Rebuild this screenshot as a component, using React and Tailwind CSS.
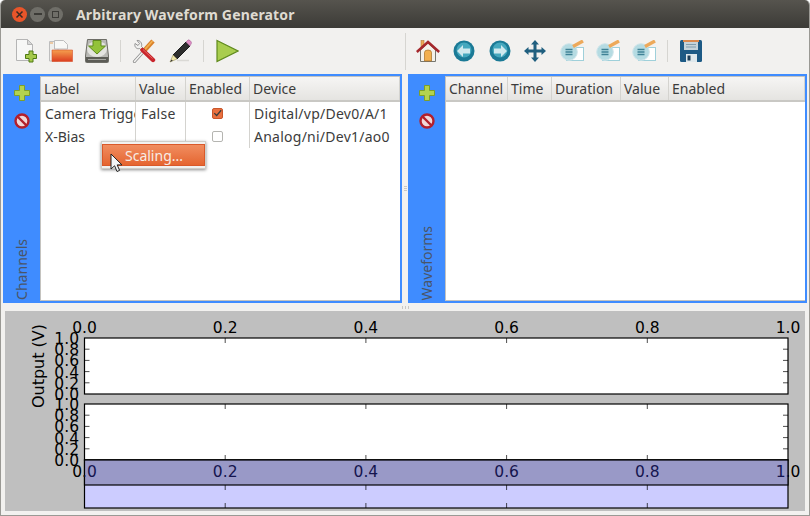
import React from "react";

const labelFont = "font-['Noto_Sans','Open_Sans',sans-serif]";

// Toolbar icons
function NewDoc() {
    return (
        <svg width="24" height="26" viewBox="0 0 24 26">
            <path d="M3.5 1.5H14.5L19.5 6.5V22.5H3.5Z" fill="#f7f7f6" stroke="#b5b5b5" />
            <path d="M14.5 1.5V6.5H19.5Z" fill="#d8d8d8" stroke="#b5b5b5" />
            <path d="M16 13H20V16.5H23.5V20.5H20V24H16V20.5H12.5V16.5H16Z" fill="#a5c94a" stroke="#4f7a14" />
        </svg>
    );
}

function OpenFolder() {
    return (
        <svg width="26" height="24" viewBox="0 0 26 24">
            <path d="M1.5 2.5H10V22H1.5Z" fill="#efefed" stroke="#bdbdbd" />
            <path d="M6.5 1.5H15.5L19.5 5.5V10H6.5Z" fill="#f8f8f6" stroke="#bdbdbd" />
            <rect x="2" y="3.5" width="3" height="1" fill="#e8a35c" />
            <path d="M4 11H24.5V22.5H4Z" fill="url(#folderFill)" stroke="#d9502a" strokeWidth="0.6" />
            <defs>
                <linearGradient id="folderFill" x1="0" y1="0" x2="0" y2="1">
                    <stop offset="0" stopColor="#f5a04e" />
                    <stop offset="1" stopColor="#dc3d20" />
                </linearGradient>
            </defs>
        </svg>
    );
}

function SaveDrive() {
    return (
        <svg width="26" height="26" viewBox="0 0 26 26">
            <path d="M3.5 1.5H22.5L24.5 18V23.5Q24.5 24.5 23.5 24.5H2.5Q1.5 24.5 1.5 23.5V18Z" fill="#b9b9b5" stroke="#6d6d66" />
            <ellipse cx="13" cy="11" rx="10" ry="8" fill="#e4e4e0" />
            <rect x="2" y="19" width="22" height="5" fill="#5c5c56" />
            <rect x="4" y="21" width="18" height="1" fill="#a5a5a0" />
            <path d="M9 2.5H17V8H21.5L13 16L4.5 8H9Z" fill="#93c23a" stroke="#5f8a1c" />
        </svg>
    );
}

function Tools() {
    return (
        <svg width="24" height="24" viewBox="0 0 24 24">
            {/* screwdriver */}
            <path d="M2.5 22.5L11 13" stroke="#8f8f8f" strokeWidth="3.2" strokeLinecap="round" />
            <path d="M2.5 22.5L11 13" stroke="#f4f4f2" strokeWidth="1.6" strokeLinecap="round" />
            <path d="M11 13L21 2" stroke="#d9802a" strokeWidth="4.6" />
            <path d="M11.5 12L20.5 2" stroke="#f2b04f" strokeWidth="1.8" />
            {/* wrench */}
            <path d="M5 1.5L7.5 4.5L6 6.5L3 4.5C2 7.5 4.5 10.5 7.5 9.5L10.5 12.5L12.5 10.5L9.5 7.5C10.5 4.5 8 0.8 5 1.5Z" fill="#f0f0ee" stroke="#8a8a8a" strokeWidth="0.9" />
            <path d="M10.5 11L21 21" stroke="#c9252c" strokeWidth="4.4" strokeLinecap="round" />
            <path d="M11 10.5L20.5 19.5" stroke="#e66a62" strokeWidth="1" />
        </svg>
    );
}

function Pencil() {
    return (
        <svg width="24" height="24" viewBox="0 0 24 24">
            <path d="M5 16L18 3L22 7L9 20Z" fill="#2e2e2e" stroke="#1d1d1d" />
            <path d="M18 3L20 1C21 0.3 23.5 2.5 23.5 4L22 7Z" fill="#e08fc5" stroke="#a8689a" strokeWidth="0.6" />
            <path d="M5 16L9 20L2 23Z" fill="#efe6a8" stroke="#9c9462" strokeWidth="0.6" />
            <path d="M2 23L3.6 20.4L4.8 21.7Z" fill="#333" />
            <path d="M9 21.5H21" stroke="#dad9d5" strokeWidth="1.5" />
        </svg>
    );
}

function Play() {
    return (
        <svg width="24" height="24" viewBox="0 0 24 24">
            <path d="M2 1.5L23 12L2 22.5Z" fill="#a9cd4e" stroke="#5f8a1c" strokeWidth="1.2" />
        </svg>
    );
}

function Home() {
    return (
        <svg width="24" height="24" viewBox="0 0 24 24">
            <rect x="5" y="1.5" width="3" height="7" fill="#eda95a" stroke="#a86f23" strokeWidth="0.5" />
            <path d="M4.5 11V22.5H19.5V11L12 4Z" fill="#f3f1ea" stroke="#77776f" />
            <path d="M8.5 22V13.5Q8.5 11 12 11Q15.5 11 15.5 13.5V22Z" fill="#f2b04f" stroke="#a86f23" strokeWidth="0.7" />
            <path d="M0.8 13L12 3L23.2 13" fill="none" stroke="#a5282c" strokeWidth="2.6" />
        </svg>
    );
}

function NavArrow({ flip }) {
    return (
        <svg width="22" height="22" viewBox="0 0 22 22">
            <circle cx="11" cy="11" r="10.5" fill="#1b7a96" />
            <circle cx="11" cy="10" r="7.5" fill="#45a8be" />
            <path
                d={flip ? "M18 11L12 5V8.5H5V13.5H12V17Z" : "M4 11L10 5V8.5H17V13.5H10V17Z"}
                fill="#cfe9ee"
            />
        </svg>
    );
}

function MoveIcon() {
    return (
        <svg width="24" height="24" viewBox="0 0 24 24" fill="#205f7f" className="-translate-x-px">
            <path d="M12 1L16 5.5H13.5V10.5H18.5V8L23 12L18.5 16V13.5H13.5V18.5H16L12 23L8 18.5H10.5V13.5H5.5V16L1 12L5.5 8V10.5H10.5V5.5H8Z" />
        </svg>
    );
}

function EditParams() {
    return (
        <svg width="24" height="22" viewBox="0 0 24 22">
            <rect x="6.5" y="7.5" width="17" height="13" fill="#fff" stroke="#9fd0da" />
            <circle cx="9" cy="12" r="8.3" fill="#b5dbe2" stroke="#cfe5ea" />
            <path d="M5.5 9.5H12.5M5.5 12H12.5M5.5 14.5H12.5" stroke="#3f8296" strokeWidth="1.3" />
            <path d="M13 6.5L23 1" stroke="#eda95a" strokeWidth="3.4" />
        </svg>
    );
}

function Floppy() {
    return (
        <svg width="24" height="24" viewBox="0 0 24 24">
            <path d="M1 2.5Q1 1 2.5 1H21.5Q23 1 23 2.5V21.5Q23 23 21.5 23H2.5Q1 23 1 21.5Z" fill="#1d5a85" />
            <rect x="4" y="1" width="16" height="2" fill="#d9894f" />
            <rect x="5" y="3" width="14" height="8" fill="#c5d3da" />
            <path d="M7 5.5H17M7 8H17" stroke="#7f9cac" />
            <rect x="7" y="15" width="11" height="8" fill="#dfe8ec" />
            <rect x="8.5" y="16.5" width="3" height="5" fill="#1d3f59" />
        </svg>
    );
}

function PlusIcon() {
    return (
        <svg width="16" height="16" viewBox="0 0 16 16">
            <path d="M5.5 0.5H10.5V5.5H15.5V10.5H10.5V15.5H5.5V10.5H0.5V5.5H5.5Z" fill="#b3d34f" stroke="#7d9f2b" />
        </svg>
    );
}

function NoEntry() {
    return (
        <svg width="16" height="16" viewBox="0 0 16 16">
            <circle cx="8" cy="8" r="6.5" fill="#f1d8d8" stroke="#b3202c" strokeWidth="2.4" />
            <path d="M3.5 3.5L12.5 12.5" stroke="#b3202c" strokeWidth="2.4" />
        </svg>
    );
}

function Cursor() {
    return (
        <svg width="14" height="21" viewBox="0 0 14 21">
            <path d="M1 1V16L4.6 12.8L7 18.5L9.6 17.4L7.2 11.9H12Z" fill="#f5f5f5" stroke="#222" strokeWidth="1" />
        </svg>
    );
}

function ToolButton({ children }) {
    return <div className="w-9 h-[26px] flex items-center justify-center">{children}</div>;
}

function ToolSep() {
    return (
        <div className="w-[11px] flex justify-center">
            <div className="w-px h-[22px] bg-[#d6d5d1]" />
        </div>
    );
}

function Checkbox({ checked }) {
    if (checked) {
        return (
            <div className="w-[11px] h-[11px] rounded-[2px] bg-[#e9703f] border border-[#c9562a] flex items-center justify-center">
                <svg width="11" height="11" viewBox="0 0 11 11">
                    <path d="M1.5 5L4.5 8L10 1.5" fill="none" stroke="#3c3c3c" strokeWidth="1.6" />
                </svg>
            </div>
        );
    }
    return <div className="w-[11px] h-[11px] rounded-[2px] bg-white border border-[#b5b5b1]" />;
}

function HeaderCell({ width, children }) {
    return (
        <div
            className="h-full flex items-center pl-[3px] border-r border-[#d4d3cf] shrink-0 overflow-hidden whitespace-nowrap"
            style={{ width }}
        >
            {children}
        </div>
    );
}

function TableHeader({ columns }) {
    return (
        <div className="h-[25px] flex bg-linear-to-b from-[#f6f5f4] to-[#e5e4e1] border-b-2 border-[#c9c8c4] text-[14px] text-[#3c3c3c]">
            {columns.map((c) => (
                <HeaderCell key={c.name} width={c.width}>{c.name}</HeaderCell>
            ))}
        </div>
    );
}

function Panel({ title, columns, className, children }) {
    return (
        <div className={"h-[229px] flex bg-[#3f8cff] p-[2px] pl-0 " + className}>
            <div className="w-[37px] shrink-0 flex flex-col items-center pt-[9px]">
                <PlusIcon />
                <div className="mt-3"><NoEntry /></div>
                <div className="mt-auto mb-[1px] [writing-mode:vertical-rl] rotate-180 text-[14px] leading-[20px] text-[#4a5568]">
                    {title}
                </div>
            </div>
            <div className="flex-1 bg-white border border-[#c4c3bf] border-r-0 relative overflow-hidden">
                <TableHeader columns={columns} />
                {children}
            </div>
        </div>
    );
}

function ChannelRow({ label, value, checked, device }) {
    return (
        <div className="h-[23px] flex items-center text-[14px] tracking-[0.25px] text-[#3c3c3c]">
            <div className="w-[95px] h-full pl-[4px] flex items-center border-r border-[#d4d3cf] overflow-hidden whitespace-nowrap shrink-0 tracking-normal">{label}</div>
            <div className="w-[50px] h-full pl-[5px] flex items-center border-r border-[#d4d3cf] shrink-0">{value}</div>
            <div className="w-[64px] h-full flex items-center justify-center border-r border-[#d4d3cf] shrink-0"><Checkbox checked={checked} /></div>
            <div className="pl-[4px] whitespace-nowrap">{device}</div>
        </div>
    );
}

// Matplotlib canvas, drawn in window coordinates
const xTicks = [0, 0.2, 0.4, 0.6, 0.8, 1];
const yTicks = [0, 0.2, 0.4, 0.6, 0.8, 1];
const LEFT = 84.5;
const RIGHT = 788;
const tx = (v) => LEFT + (RIGHT - LEFT) * v;

function XLabels({ y, fill }) {
    return xTicks.map((v) => (
        <text key={v} x={tx(v)} y={y} textAnchor="middle" fill={fill}>{v.toFixed(1)}</text>
    ));
}

function Axes({ top, bottom, fill, topTicks, bottomTicks, sideTicks }) {
    const h = bottom - top;
    return (
        <g>
            <rect x={LEFT} y={top} width={RIGHT - LEFT} height={h} fill={fill} stroke="#000" strokeWidth="1.2" />
            {topTicks && xTicks.slice(1, 5).map((v) => (
                <path key={v} d={`M${tx(v)} ${top}v5`} stroke="#000" strokeWidth="0.7" />
            ))}
            {bottomTicks && xTicks.slice(1, 5).map((v) => (
                <path key={v} d={`M${tx(v)} ${bottom}v-5`} stroke="#000" strokeWidth="0.7" />
            ))}
            {sideTicks && yTicks.slice(1, 5).map((v) => (
                <path
                    key={v}
                    d={`M${LEFT} ${bottom - h * v}h5M${RIGHT} ${bottom - h * v}h-5`}
                    stroke="#000"
                    strokeWidth="0.7"
                />
            ))}
        </g>
    );
}

function YLabels({ top, bottom }) {
    return yTicks.map((v) => (
        <text key={v} x="79" y={bottom - (bottom - top) * v + 6} textAnchor="end">{v.toFixed(1)}</text>
    ));
}

function PlotCanvas() {
    return (
        <svg width="800" height="200" viewBox="5 311 800 200" className="block bg-[#bfbfbf]" fontFamily="'DejaVu Sans', sans-serif" fontSize="15.5">
            <defs>
                <clipPath id="band">
                    <rect x={LEFT} y="460" width={RIGHT - LEFT} height="25" />
                </clipPath>
            </defs>
            <Axes top={338} bottom={394} fill="#fff" topTicks sideTicks />
            <Axes top={404} bottom={460} fill="#fff" topTicks bottomTicks sideTicks />
            <Axes top={460} bottom={508} fill="#ccccff" bottomTicks />
            <XLabels y={333} fill="#000" />
            <YLabels top={338} bottom={394} />
            <YLabels top={404} bottom={460} />
            <XLabels y={477} fill="#000" />
            <rect x={LEFT} y="460" width={RIGHT - LEFT} height="25" fill="#9999c7" stroke="#000" strokeWidth="1.2" />
            <g clipPath="url(#band)">
                <XLabels y={477} fill="#15154f" />
            </g>
            {xTicks.slice(1, 5).map((v) => (
                <path key={v} d={`M${tx(v)} 485v5`} stroke="#000" strokeWidth="0.7" />
            ))}
            <text transform="translate(44 366) rotate(-90)" textAnchor="middle" fontSize="16">Output (V)</text>
        </svg>
    );
}

const channelColumns = [
    { name: "Label", width: 95 },
    { name: "Value", width: 50 },
    { name: "Enabled", width: 64 },
    { name: "Device", width: 150 },
];

const waveformColumns = [
    { name: "Channel", width: 62 },
    { name: "Time", width: 44 },
    { name: "Duration", width: 69 },
    { name: "Value", width: 48 },
    { name: "Enabled", width: 136 },
];

function App() {
    return (
        <div className={"w-[810px] h-[516px] bg-[#f2f1ef] flex flex-col overflow-hidden rounded-t-[5px] border-x border-b border-[#9a9994] " + labelFont}>
            {/* Title bar */}
            <div className="h-[28px] -mx-px shrink-0 flex items-center bg-linear-to-b from-[#56544e] to-[#3c3b37] rounded-t-[5px]">
                <div className="ml-[12px] w-[15px] h-[15px] rounded-full bg-[#e8552a] flex items-center justify-center">
                    <svg width="9" height="9" viewBox="0 0 9 9"><path d="M1.5 1.5L7.5 7.5M7.5 1.5L1.5 7.5" stroke="#3a2a22" strokeWidth="1.5" /></svg>
                </div>
                <div className="ml-[3px] w-[15px] h-[15px] rounded-full bg-[#6f6e68] flex items-center justify-center">
                    <div className="w-[8px] h-[2px] bg-[#3c3b37]" />
                </div>
                <div className="ml-[3px] w-[15px] h-[15px] rounded-full bg-[#6f6e68] flex items-center justify-center">
                    <div className="w-[7px] h-[7px] border border-[#3c3b37]" />
                </div>
                <div className="ml-[13px] text-[14px] font-bold tracking-[0.15px] text-[#dfdbd2]">Arbitrary Waveform Generator</div>
            </div>

            {/* Toolbars */}
            <div className="h-[46px] shrink-0 flex items-center">
                <div className="w-[404px] pl-[6px] flex items-center">
                    <ToolButton><NewDoc /></ToolButton>
                    <ToolButton><OpenFolder /></ToolButton>
                    <ToolButton><SaveDrive /></ToolButton>
                    <ToolSep />
                    <ToolButton><Tools /></ToolButton>
                    <ToolButton><Pencil /></ToolButton>
                    <ToolSep />
                    <ToolButton><Play /></ToolButton>
                </div>
                <div className="w-px h-[37px] bg-[#d6d5d1]" />
                <div className="pl-[4px] flex items-center">
                    <ToolButton><Home /></ToolButton>
                    <ToolButton><NavArrow /></ToolButton>
                    <ToolButton><NavArrow flip /></ToolButton>
                    <ToolButton><MoveIcon /></ToolButton>
                    <ToolButton><EditParams /></ToolButton>
                    <ToolButton><EditParams /></ToolButton>
                    <ToolButton><EditParams /></ToolButton>
                    <ToolSep />
                    <ToolButton><Floppy /></ToolButton>
                </div>
            </div>

            {/* Channel and waveform tables */}
            <div className="flex pl-[2px]">
                <Panel title="Channels" columns={channelColumns} className="w-[399px]">
                    <ChannelRow label="Camera Trigger" value="False" checked device="Digital/vp/Dev0/A/1" />
                    <ChannelRow label="X-Bias" value="" device="Analog/ni/Dev1/ao0" />
                    {/* Context menu */}
                    <div className="absolute left-[60px] top-[64px] w-[105px] h-[28px] bg-[#f2f1ef] border border-[#cfcec9] shadow-[0_1px_3px_rgba(0,0,0,0.45)] py-[2px]">
                        <div className="h-[22px] flex items-center pl-[22px] text-[14px] text-[#f7ece5] bg-linear-to-b from-[#f08d5f] to-[#e5652f] border border-[#d9592a]">
                            Scaling...
                        </div>
                    </div>
                    <div className="absolute left-[69px] top-[76px]"><Cursor /></div>
                </Panel>
                <div className="w-[6px] flex flex-col items-center justify-center gap-[1px]">
                    <div className="w-[3px] h-px bg-[#c9c8c4]" />
                    <div className="w-[3px] h-px bg-[#c9c8c4]" />
                    <div className="w-[3px] h-px bg-[#c9c8c4]" />
                </div>
                <Panel title="Waveforms" columns={waveformColumns} className="w-[399px]" />
            </div>

            {/* Splitter */}
            <div className="h-[8px] shrink-0 flex items-center justify-center gap-[2px]">
                <div className="w-px h-[3px] bg-[#c9c8c4]" />
                <div className="w-px h-[3px] bg-[#c9c8c4]" />
                <div className="w-px h-[3px] bg-[#c9c8c4]" />
            </div>

            {/* Plot */}
            <div className="pl-[4px]">
                <PlotCanvas />
            </div>
        </div>
    );
}

export default App;
